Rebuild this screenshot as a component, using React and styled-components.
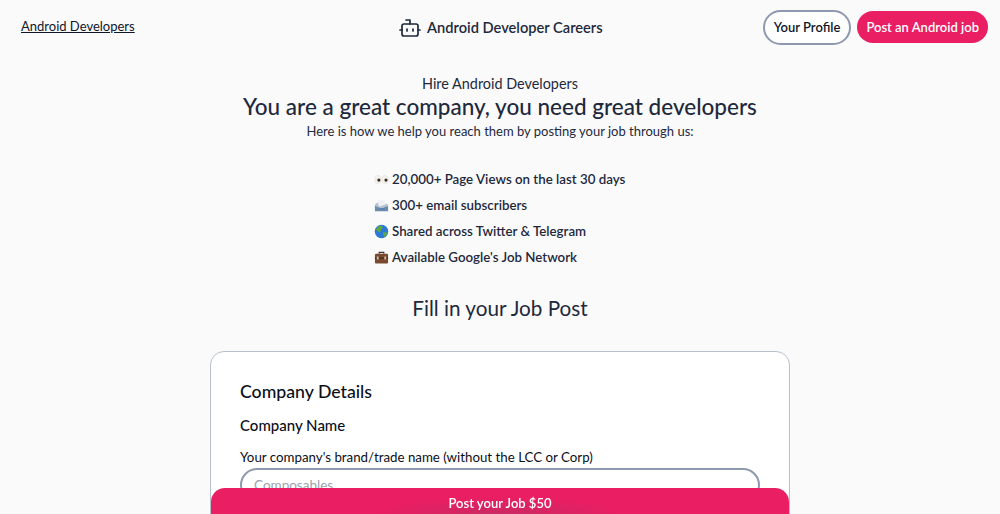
import React from "react";
import styled, { createGlobalStyle } from "styled-components";
import { Bot } from "lucide-react";

const Global = createGlobalStyle`
  html, body { margin: 0; padding: 0; background: #fafafb; height: 100%; overflow: hidden; }
  body { font-family: Lato, "Noto Sans", sans-serif; color: #1e293b; }
  * { box-sizing: border-box; }
`;

const Page = styled.div`
  display: flex;
  flex-direction: column;
  height: 514px;
  overflow: hidden;
`;

const Header = styled.header`
  display: grid;
  grid-template-columns: 377px auto 1fr;
  align-items: start;
  padding: 10px 12px 0 21px;
  height: 73px;
`;

const HomeLink = styled.a`
  display: inline-block;
  font-size: 13px;
  line-height: 18px;
  margin-top: 7px;
  color: #0f172a;
  text-decoration: underline;
`;

const Brand = styled.div`
  display: flex;
  align-items: center;
  gap: 5px;
  font-size: 14.65px;
  line-height: 20px;
  font-weight: 600;
  color: #1e293b;
  margin-top: 6px;
  svg { display: block; }
`;

const Actions = styled.div`
  display: flex;
  justify-content: flex-end;
  align-items: center;
  gap: 6px;
  height: 34px;
`;

const PillOutline = styled.button`
  height: 35px;
  padding: 0 9px;
  border: 2px solid #8d99ae;
  border-radius: 18px;
  background: #fff;
  color: #0f172a;
  font: 600 13px Lato, sans-serif;
`;

const PillSolid = styled.button`
  height: 32px;
  padding: 0 9px;
  border: 0;
  border-radius: 16px;
  background: #e91e63;
  color: #fff;
  font: 600 13px Lato, sans-serif;
`;

const Intro = styled.section`
  display: flex;
  flex-direction: column;
  align-items: center;
  margin-top: 29px;
  color: #1e293b;
`;

const Eyebrow = styled.div`
  font-size: 14.4px;
  line-height: 21px;
`;

const Title = styled.h1`
  margin: 0;
  font-size: 22.5px;
  line-height: 26px;
  font-weight: 500;
`;

const Sub = styled.p`
  margin: 1px 0 0;
  font-size: 13px;
  line-height: 20px;
`;

const Perks = styled.ul`
  list-style: none;
  margin: 25px auto 0;
  padding: 0 0 0 374px;
  width: 100%;
`;

const Perk = styled.li`
  display: flex;
  align-items: center;
  gap: 3px;
  height: 26px;
  font-size: 13.3px;
  font-weight: 600;
  color: #1e293b;
`;

const Emoji = styled.svg`
  width: 15px;
  height: 15px;
  flex: none;
`;

const FormHeading = styled.h2`
  margin: 23px 0 0;
  text-align: center;
  font-size: 20.7px;
  line-height: 30px;
  font-weight: 400;
  color: #1e293b;
`;

const Card = styled.form`
  width: 580px;
  margin: 28px 0 0 210px;
  padding: 28px 29px 40px;
  background: #fff;
  border: 1px solid #b8bfcc;
  border-radius: 14px;
  color: #0b0f19;
`;

const CardTitle = styled.h3`
  margin: 0;
  font-size: 17.7px;
  line-height: 24px;
  font-weight: 500;
`;

const FieldTitle = styled.h4`
  margin: 9px 0 0;
  font-size: 15px;
  line-height: 24px;
  font-weight: 500;
`;

const Hint = styled.label`
  display: block;
  margin-top: 11px;
  font-size: 13.3px;
  line-height: 18px;
`;

const Input = styled.input`
  display: block;
  width: 100%;
  height: 34px;
  margin-top: 2px;
  padding: 0 12px;
  border: 2px solid #8d99ae;
  border-radius: 17px;
  font: 400 13.5px Lato, sans-serif;
  &::placeholder { color: #9ca3af; }
`;

const Submit = styled.button`
  position: fixed;
  left: 211px;
  top: 488px;
  width: 578px;
  height: 40px;
  padding: 0 0 10px;
  border: 0;
  border-radius: 14px;
  background: radial-gradient(ellipse 120px 16px at 50% 26px, #c92a63, #e91e63);
  color: #fff;
  font: 600 13px Lato, sans-serif;
`;

const Eyes = () => (
  <Emoji viewBox="0 0 16 16">
    <ellipse cx="4.2" cy="8" rx="3.5" ry="4.3" fill="#f4f1ec" stroke="#d8d4cc" strokeWidth=".4" />
    <ellipse cx="11.8" cy="8" rx="3.5" ry="4.3" fill="#f4f1ec" stroke="#d8d4cc" strokeWidth=".4" />
    <circle cx="5.2" cy="8.6" r="1.7" fill="#3a2c22" />
    <circle cx="12.8" cy="8.6" r="1.7" fill="#3a2c22" />
  </Emoji>
);

const Mail = () => (
  <Emoji viewBox="0 0 16 16">
    <path d="M1 7l5-4 9 4v6H1z" fill="#b4c2cf" />
    <path d="M3 3l8-1 1.500 5-7 2z" fill="#eef1f4" />
    <path d="M1 8.500l7 3 7-3V14H1z" fill="#6b8cab" />
    <path d="M4 10l5 1.500 4-2-4 3z" fill="#2f68b8" />
  </Emoji>
);

const Globe = () => (
  <Emoji viewBox="0 0 16 16">
    <circle cx="8" cy="8" r="7.2" fill="#2a79d6" />
    <path d="M4 3l4-1.5 1.5 2-2 2.5-1 3L4.500 8 2 6.500zM9.500 9l3.500-.5 1 2-2.500 3.500-1.500-2z" fill="#5fa83c" />
  </Emoji>
);

const Case = () => (
  <Emoji viewBox="0 0 16 16">
    <path d="M5.500 4V2.500h5V4" fill="none" stroke="#4a3226" strokeWidth="1.200" />
    <rect x="1" y="4" width="14" height="10.500" rx="1.200" fill="#7a4a30" />
    <rect x="1" y="8" width="14" height="1.200" fill="#3d2518" />
    <rect x="3" y="7" width="2" height="3" fill="#d9c4a0" />
    <rect x="11" y="7" width="2" height="3" fill="#d9c4a0" />
  </Emoji>
);

export default function App() {
  return (
    <Page>
      <Global />
      <Header>
        <div><HomeLink href="#">Android Developers</HomeLink></div>
        <Brand>
          <Bot size={24} strokeWidth={1.7} color="#1e293b" />
          Android Developer Careers
        </Brand>
        <Actions>
          <PillOutline type="button">Your Profile</PillOutline>
          <PillSolid type="button">Post an Android job</PillSolid>
        </Actions>
      </Header>
      <Intro>
        <Eyebrow>Hire Android Developers</Eyebrow>
        <Title>You are a great company, you need great developers</Title>
        <Sub>Here is how we help you reach them by posting your job through us:</Sub>
      </Intro>
      <Perks>
        <Perk><Eyes />20,000+ Page Views on the last 30 days</Perk>
        <Perk><Mail />300+ email subscribers</Perk>
        <Perk><Globe />Shared across Twitter &amp; Telegram</Perk>
        <Perk><Case />Available Google's Job Network</Perk>
      </Perks>
      <FormHeading>Fill in your Job Post</FormHeading>
      <Card>
        <CardTitle>Company Details</CardTitle>
        <FieldTitle>Company Name</FieldTitle>
        <Hint htmlFor="company">Your company's brand/trade name (without the LCC or Corp)</Hint>
        <Input id="company" placeholder="Composables" />
      </Card>
      <Submit type="button">Post your Job $50</Submit>
    </Page>
  );
}
